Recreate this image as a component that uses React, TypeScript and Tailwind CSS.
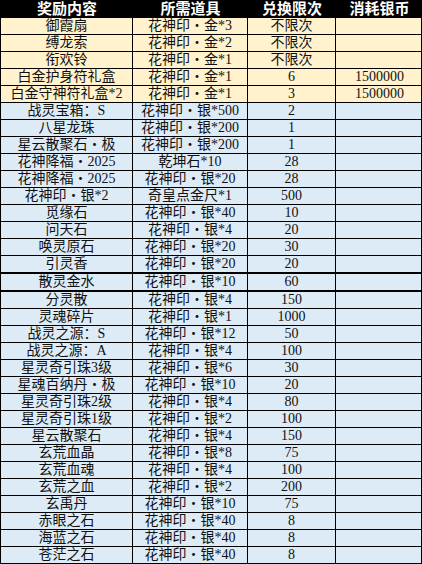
const goldRows = [
  ["御霞扇", "花神印・金*3", "不限次", ""],
  ["缚龙索", "花神印・金*2", "不限次", ""],
  ["衔欢铃", "花神印・金*1", "不限次", ""],
  ["白金护身符礼盒", "花神印・金*1", "6", "1500000"],
  ["白金守神符礼盒*2", "花神印・金*1", "3", "1500000"],
]

const blueRows = [
  ["战灵宝箱：S", "花神印・银*500", "2"],
  ["八星龙珠", "花神印・银*200", "1"],
  ["星云散聚石・极", "花神印・银*200", "1"],
  ["花神降福・2025", "乾坤石*10", "28"],
  ["花神降福・2025", "花神印・银*20", "28"],
  ["花神印・银*2", "奇皇点金尺*1", "500"],
  ["觅缘石", "花神印・银*40", "10"],
  ["问天石", "花神印・银*4", "20"],
  ["唤灵原石", "花神印・银*20", "30"],
  ["引灵香", "花神印・银*20", "20"],
  ["散灵金水", "花神印・银*10", "60"],
  ["分灵散", "花神印・银*4", "150"],
  ["灵魂碎片", "花神印・银*1", "1000"],
  ["战灵之源：S", "花神印・银*12", "50"],
  ["战灵之源：A", "花神印・银*4", "100"],
  ["星灵奇引珠3级", "花神印・银*6", "30"],
  ["星魂百纳丹・极", "花神印・银*10", "20"],
  ["星灵奇引珠2级", "花神印・银*4", "80"],
  ["星灵奇引珠1级", "花神印・银*2", "100"],
  ["星云散聚石", "花神印・银*4", "150"],
  ["玄荒血晶", "花神印・银*8", "75"],
  ["玄荒血魂", "花神印・银*4", "100"],
  ["玄荒之血", "花神印・银*2", "200"],
  ["玄禹丹", "花神印・银*10", "75"],
  ["赤眼之石", "花神印・银*40", "8"],
  ["海蓝之石", "花神印・银*40", "8"],
  ["苍茫之石", "花神印・银*40", "8"],
]

const cols = "grid grid-cols-[132px_115px_88px_87px]"
const cell = "flex items-center justify-center border-r border-black whitespace-nowrap"

function Row({ cells, bg, thick }: { cells: string[]; bg: string; thick?: boolean }) {
  return (
    <div className={`${cols} ${bg} ${thick ? "h-[18px] border-b-2" : "h-[17px] border-b"} border-black`}>
      {cells.map((c, i) => (
        <div key={i} className={`${cell} ${i === 3 ? "border-r-0" : ""}`}>
          {c}
        </div>
      ))}
    </div>
  )
}

export default function App() {
  return (
    <div className="w-[422px] h-[564px] overflow-hidden bg-white">
      <div className="w-[422px] border-l border-r border-black text-[14px] leading-[16px] text-[#111] font-['Liberation_Serif','Noto_Sans_CJK_SC',serif]">
        {/* header */}
        <div className={`${cols} h-[18px] bg-black text-white text-[15px] font-bold`}>
          <div className="flex items-center justify-center">奖励内容</div>
          <div className="flex items-center justify-center">所需道具</div>
          <div className="flex items-center justify-center">兑换限次</div>
          <div className="flex items-center justify-center">消耗银币</div>
        </div>

        {goldRows.map((r, i) => (
          <Row key={"g" + i} cells={r} bg="bg-[#fff2cc]" />
        ))}

        {blueRows.map((r, i) => (
          <Row key={"b" + i} cells={[...r, ""]} bg="bg-[#ddebf7]" thick={i === 9 || i === 10} />
        ))}
      </div>
    </div>
  )
}
